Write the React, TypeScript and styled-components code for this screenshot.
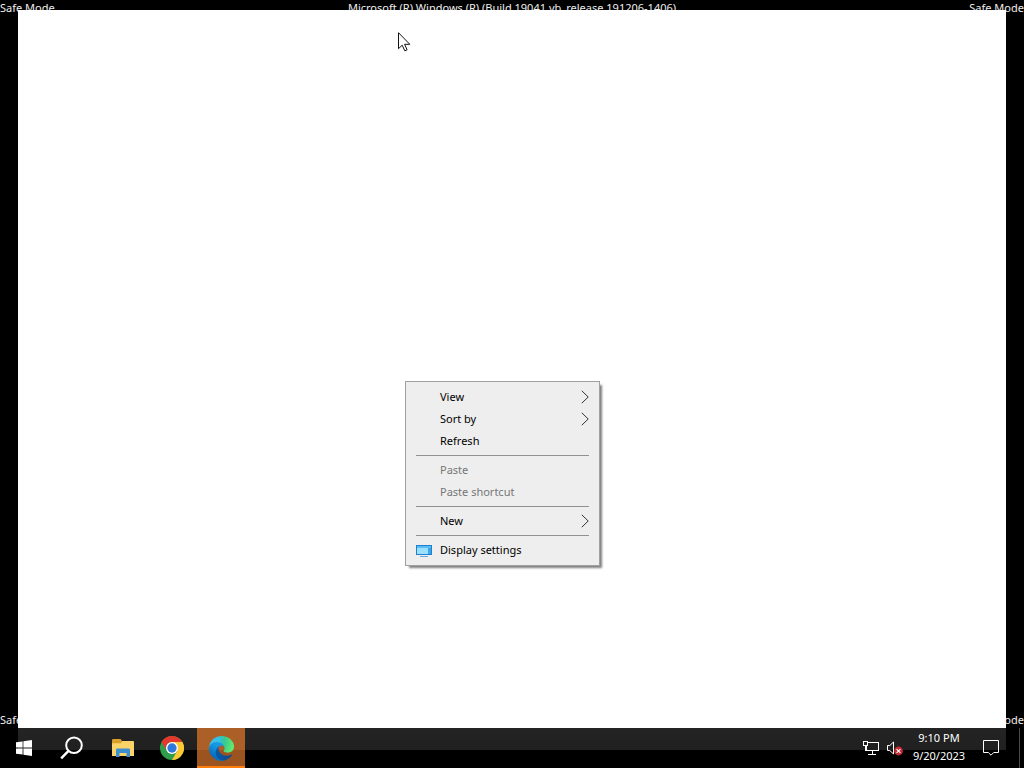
import React from "react";
import styled, { createGlobalStyle, css } from "styled-components";

const GlobalStyle = createGlobalStyle`
  * { box-sizing: border-box; }
  body {
    margin: 0;
    background: #000;
    font-family: "Noto Sans", "Open Sans", sans-serif;
    font-size: 12px;
    line-height: 16px;
  }
  button {
    font: inherit;
    color: inherit;
    border: 0;
    padding: 0;
    margin: 0;
    background: none;
  }
  svg { display: block; flex: none; }
`;

const Screen = styled.div`
  display: flex;
  flex-direction: column;
  min-height: 100vh;
  background: #000;
  color: #fff;
  overflow: hidden;
`;

const TopMarks = styled.header`
  display: flex;
  justify-content: space-between;
  height: 10px;
  white-space: nowrap;
`;

const Mark = styled.span`
  color: #eee;
  font-size: 11px;
`;

const Middle = styled.div`
  flex: 1;
  display: flex;
`;

const Gutter = styled.div<{ $side: "left" | "right" }>`
  width: 18px;
  display: flex;
  align-items: flex-end;
  justify-content: ${(p) => (p.$side === "left" ? "flex-start" : "flex-end")};
  white-space: nowrap;
`;

const Desktop = styled.main`
  position: relative;
  z-index: 1;
  flex: 1;
  background: #fff;
`;

const Pointer = styled.svg`
  position: absolute;
  left: 380px;
  top: 22px;
`;

const Menu = styled.div`
  position: absolute;
  left: 387px;
  top: 371px;
  width: 195px;
  padding: 4px 0;
  background: #eee;
  border: 1px solid #a0a0a0;
  box-shadow: 3px 3px 2px -1px rgba(0, 0, 0, 0.5);
  color: #000;
`;

const MenuItem = styled.button`
  display: grid;
  grid-template-columns: 24px 1fr 8px;
  align-items: center;
  width: 100%;
  height: 22px;
  padding: 0 10px;
  text-align: left;
  font-size: 11px;
  &:disabled { color: #767676; }
`;

const Separator = styled.hr`
  height: 1px;
  margin: 3px 10px;
  border: 0;
  background: #919191;
`;

const Taskbar = styled.footer`
  display: flex;
  height: 40px;
  background: linear-gradient(#242424, #202020) no-repeat 18px 0 / calc(100% - 36px) 22px #000;
`;

const TaskButton = styled.button<{ $active?: boolean }>`
  display: flex;
  align-items: center;
  justify-content: center;
  width: 48px;
  height: 40px;
  ${(p) =>
    p.$active &&
    css`
      background: linear-gradient(#ac5f26 22px, #9b541f 22px);
      border-bottom: 2px solid #ff7d0c;
      padding-top: 2px;
    `}
`;

const Apps = styled.nav`
  display: flex;
  gap: 1px;
  margin-left: 3px;
`;

const Tray = styled.div`
  display: flex;
  align-items: center;
  margin-left: auto;
`;

const TrayButton = styled.button`
  display: flex;
  align-items: center;
  justify-content: center;
  width: 24px;
  height: 40px;
`;

const Clock = styled.button`
  width: 64px;
  height: 40px;
  padding-bottom: 2px;
  text-align: center;
  line-height: 18px;
  font-size: 11px;
`;

const Notifications = styled(TrayButton)`
  width: 40px;
`;

const ShowDesktop = styled.button`
  width: 5px;
  height: 40px;
  margin-left: 8px;
  border-left: 1px solid #4a4a4a;
`;

const Chevron = () => (
  <svg width="8" height="14" viewBox="0 0 8 14" fill="none" stroke="#333">
    <path d="M.8.8 7.2 7 .8 13.2" />
  </svg>
);

const DisplayIcon = () => (
  <svg width="16" height="14" viewBox="0 0 16 14">
    <rect x="0" y="2" width="16" height="10" fill="#1f7fd0" />
    <rect x="1" y="3" width="14" height="8" fill="#58bdf2" />
    <rect x="1" y="5" width="11" height="6" fill="#9be0fd" />
    <path d="M12 5h3v6h-3z" fill="#3ba5e8" />
    <path d="M4 13h8v1H4z" fill="#6fa9d2" />
  </svg>
);

const WindowsIcon = () => (
  <svg width="16" height="16" viewBox="0 0 16 16" fill="#fff">
    <path d="M0 2.3 6.6 1.4v6.1H0zM7.4 1.2 16 0v7.5H7.4zM0 8.4h6.6v6.2L0 13.7zM7.4 8.4H16V16l-8.6-1.2z" />
  </svg>
);

const SearchIcon = () => (
  <svg width="24" height="24" viewBox="0 0 24 24" fill="none" stroke="#fff">
    <circle cx="14" cy="9.2" r="7.8" strokeWidth="2" />
    <path d="m8.5 14.9-7.3 7.5" strokeWidth="2.4" />
  </svg>
);

const FolderIcon = () => (
  <svg width="22" height="20" viewBox="0 0 22 20">
    <path d="M0 2.2Q0 1 1.2 1h7.3l1.6 2H21v4H0z" fill="#d9a02c" />
    <path d="M0 5.2h9L10.5 3H21q1 0 1 1v14H0z" fill="#fbd469" />
    <path d="M4 19v-7.2q0-1.3 1.3-1.3h11.4q1.3 0 1.3 1.3V19h-3.5v-4h-7v4z" fill="#3e8fd0" />
  </svg>
);

const ChromeIcon = () => (
  <svg width="24" height="24" viewBox="0 0 48 48">
    <circle cx="24" cy="24" r="24" fill="#2f9e4b" />
    <path d="M24 12h20.8A24 24 0 0 1 24 48l10.4-18z" fill="#fcc934" />
    <path d="M3.2 12a24 24 0 0 1 41.6 0H24a12 12 0 0 0-10.4 18z" fill="#e5382c" />
    <circle cx="24" cy="24" r="12" fill="#fff" />
    <circle cx="24" cy="24" r="9.3" fill="#2f78dc" />
  </svg>
);

const EdgeIcon = () => (
  <svg width="25" height="25" viewBox="0 0 256 256">
    <defs>
      <linearGradient id="edgeDeep" x1="60" y1="177" x2="232" y2="177" gradientUnits="userSpaceOnUse">
        <stop stopColor="#0c59a4" />
        <stop offset="1" stopColor="#114a8b" />
      </linearGradient>
      <linearGradient id="edgeBlue" x1="140" y1="80" x2="40" y2="220" gradientUnits="userSpaceOnUse">
        <stop stopColor="#1b9de2" />
        <stop offset=".4" stopColor="#1595df" />
        <stop offset="1" stopColor="#0669bf" />
      </linearGradient>
      <radialGradient id="edgeGreen" cx="26" cy="47" r="230" gradientUnits="userSpaceOnUse">
        <stop stopColor="#35c1f1" />
        <stop offset=".3" stopColor="#34c1ed" />
        <stop offset=".6" stopColor="#36c98f" />
        <stop offset="1" stopColor="#66eb6e" />
      </radialGradient>
    </defs>
    <path
      fill="url(#edgeDeep)"
      d="M231 190.5c-3.4 1.8-6.9 3.4-10.5 4.7a101.7 101.7 0 0 1-35.9 6.4c-47.3 0-88.5-32.5-88.5-74.3.1-11.4 6.4-21.9 16.4-27.3-42.8 1.8-53.8 46.4-53.8 72.5 0 73.9 68.1 81.4 82.8 81.4 7.9 0 19.8-2.3 27-4.6l1.3-.4a128.3 128.3 0 0 0 66.6-52.8 4 4 0 0 0-5.4-5.6z"
    />
    <path
      fill="url(#edgeBlue)"
      d="M105.7 241.4a79.2 79.2 0 0 1-22.7-21.3 80.7 80.7 0 0 1 29.5-120c3.2-1.5 8.5-4.1 15.6-4a32.4 32.4 0 0 1 25.7 13 31.9 31.9 0 0 1 6.3 18.7c0-.2 24.5-79.6-80-79.6-43.9 0-80 41.7-80 78.2a130.2 130.2 0 0 0 12.1 56 128 128 0 0 0 156.4 67 75.5 75.5 0 0 1-62.8-8z"
    />
    <path
      fill="url(#edgeGreen)"
      d="M152.3 148.9c-.9 1-3.4 2.5-3.4 5.6 0 2.6 1.7 5.2 4.8 7.3 14.3 10 41.4 8.6 41.5 8.6 10.7 0 21.1-2.9 30.3-8.3A61.4 61.4 0 0 0 256 109.1c.3-22.4-8-37.3-11.3-43.9C223.5 23.9 177.7 0 128 0A128 128 0 0 0 0 126.2c.5-36.5 36.8-66 80-66 3.5 0 23.5.3 42 10.1 16.3 8.5 24.9 18.9 30.8 29.2 6.2 10.7 7.3 24.1 7.3 29.5 0 5.3-2.7 13.3-7.8 19.9z"
    />
  </svg>
);

const NetworkIcon = () => (
  <svg width="16" height="14" viewBox="0 0 16 14" fill="none" stroke="#fff" shapeRendering="crispEdges">
    <path d="M5 1.5h10.5v8H3.5V5M.5.5h4v4h-4zM2.5 4v6M9.5 10v3M5 13.5h8" />
  </svg>
);

const MutedIcon = () => (
  <svg width="16" height="16" viewBox="0 0 16 16" fill="none">
    <path d="M.5 5.5h2.3L6.5 2v12L2.8 10.5H.5z" stroke="#fff" />
    <circle cx="11.5" cy="11" r="4.4" fill="#c42b35" />
    <path d="m9.6 9.1 3.8 3.8m0-3.8-3.8 3.8" stroke="#fff" strokeWidth="1.1" />
  </svg>
);

const BubbleIcon = () => (
  <svg width="16" height="16" viewBox="0 0 16 16" fill="none" stroke="#fff">
    <path d="M.5.5h15v12h-4.8L8 15.2l-2.7-2.7H.5z" />
  </svg>
);

const PointerIcon = () => (
  <Pointer width="13" height="20" viewBox="0 0 13 20">
    <path d="M.5.7v16l3.7-3.5 2.6 5.6 2.3-1-2.5-5.5h5.2z" fill="#fff" stroke="#111" />
  </Pointer>
);

type Entry =
  | { kind: "separator" }
  | { kind: "item"; label: string; submenu?: boolean; disabled?: boolean; icon?: React.ReactNode };

const entries: Entry[] = [
  { kind: "item", label: "View", submenu: true },
  { kind: "item", label: "Sort by", submenu: true },
  { kind: "item", label: "Refresh" },
  { kind: "separator" },
  { kind: "item", label: "Paste", disabled: true },
  { kind: "item", label: "Paste shortcut", disabled: true },
  { kind: "separator" },
  { kind: "item", label: "New", submenu: true },
  { kind: "separator" },
  { kind: "item", label: "Display settings", icon: <DisplayIcon /> },
];

export default function App() {
  return (
    <Screen>
      <GlobalStyle />
      <TopMarks>
        <Mark>Safe Mode</Mark>
        <Mark>Microsoft (R) Windows (R) (Build 19041.vb_release.191206-1406)</Mark>
        <Mark>Safe Mode</Mark>
      </TopMarks>
      <Middle>
        <Gutter $side="left">
          <Mark>Safe Mode</Mark>
        </Gutter>
        <Desktop>
          <PointerIcon />
          <Menu role="menu" aria-label="Desktop">
            {entries.map((entry, i) =>
              entry.kind === "separator" ? (
                <Separator key={i} />
              ) : (
                <MenuItem key={i} type="button" role="menuitem" disabled={entry.disabled}>
                  <span>{entry.icon}</span>
                  <span>{entry.label}</span>
                  {entry.submenu && <Chevron />}
                </MenuItem>
              )
            )}
          </Menu>
        </Desktop>
        <Gutter $side="right">
          <Mark>Safe Mode</Mark>
        </Gutter>
      </Middle>
      <Taskbar>
        <TaskButton type="button" aria-label="Start"><WindowsIcon /></TaskButton>
        <TaskButton type="button" aria-label="Search"><SearchIcon /></TaskButton>
        <Apps aria-label="Apps">
          <TaskButton type="button" aria-label="File Explorer"><FolderIcon /></TaskButton>
          <TaskButton type="button" aria-label="Google Chrome"><ChromeIcon /></TaskButton>
          <TaskButton type="button" aria-label="Microsoft Edge" $active><EdgeIcon /></TaskButton>
        </Apps>
        <Tray>
          <TrayButton type="button" aria-label="Network"><NetworkIcon /></TrayButton>
          <TrayButton type="button" aria-label="Volume muted"><MutedIcon /></TrayButton>
          <Clock type="button">
            <div>9:10 PM</div>
            <div>9/20/2023</div>
          </Clock>
          <Notifications type="button" aria-label="Notifications"><BubbleIcon /></Notifications>
          <ShowDesktop type="button" aria-label="Show desktop" />
        </Tray>
      </Taskbar>
    </Screen>
  );
}
